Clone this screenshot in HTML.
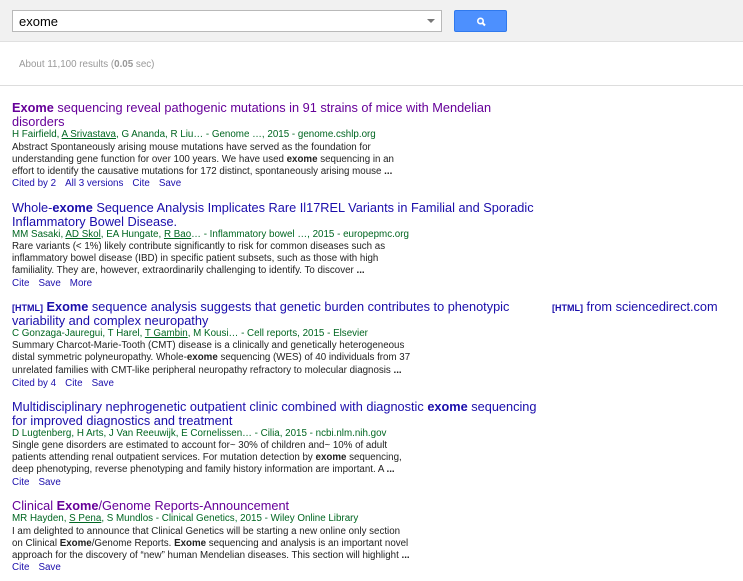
<!DOCTYPE html>
<html><head><meta charset="utf-8"><style>
*{margin:0;padding:0;box-sizing:border-box}
body{width:743px;height:581px;overflow:hidden;background:#fff;font-family:"Liberation Sans",Arial,sans-serif;position:relative}
.hdr{position:absolute;left:0;top:0;width:743px;height:42px;background:#f1f1f1;border-bottom:1px solid #e0e0e0}
.box{position:absolute;left:12px;top:10px;width:430px;height:22px;background:#fff;border:1px solid #b9b9b9;font-size:13px;padding:3px 6px;color:#000}
.arr{position:absolute;left:427px;top:19px;width:0;height:0;border-left:4px solid transparent;border-right:4px solid transparent;border-top:4px solid #777}
.btn{position:absolute;left:454px;top:10px;width:53px;height:22px;background:#4d90fe;border:1px solid #3079ed;border-radius:2px}
.cnt{position:absolute;left:19px;top:59px;font-size:9.8px;color:#999}
.sep{position:absolute;left:0;top:85px;width:743px;height:1px;background:#ddd}
.l{position:absolute;left:12px;white-space:nowrap}
.t{font-size:12.75px;line-height:14px;color:#1a0dab}
.v{color:#660099}
.a{font-size:9.8px;line-height:12px;color:#006621}
.a u{text-decoration:underline}
.s{font-size:9.75px;line-height:12px;color:#222}
.k{font-size:9.8px;line-height:12px;color:#1a0dab}
.k span{margin-right:9px}
.h{font-size:9px;font-weight:bold;color:#1a0dab}
</style></head><body>
<div class="hdr"></div>
<div class="box">exome</div><div class="arr"></div>
<div class="btn"><svg width="53" height="22" viewBox="0 0 53 22"><circle cx="25.5" cy="10" r="2.7" fill="none" stroke="#fff" stroke-width="1.6"/><line x1="27.5" y1="12" x2="30" y2="14.5" stroke="#fff" stroke-width="2"/></svg></div>
<div class="cnt">About 11,100 results (<b>0.05</b> sec)</div>
<div class="sep"></div>

<div class="l t v" style="top:101px"><b>Exome</b> sequencing reveal pathogenic mutations in 91 strains of mice with Mendelian</div>
<div class="l t v" style="top:115px">disorders</div>
<div class="l a" style="top:129px">H Fairfield, <u>A Srivastava</u>, G Ananda, R Liu… - Genome …, 2015 - genome.cshlp.org</div>
<div class="l s" style="top:142px">Abstract Spontaneously arising mouse mutations have served as the foundation for</div>
<div class="l s" style="top:154px">understanding gene function for over 100 years. We have used <b>exome</b> sequencing in an</div>
<div class="l s" style="top:166px">effort to identify the causative mutations for 172 distinct, spontaneously arising mouse <b>...</b></div>
<div class="l k" style="top:178px"><span>Cited by 2</span><span>All 3 versions</span><span>Cite</span><span>Save</span></div>

<div class="l t" style="top:201px">Whole-<b>exome</b> Sequence Analysis Implicates Rare Il17REL Variants in Familial and Sporadic</div>
<div class="l t" style="top:215px">Inflammatory Bowel Disease.</div>
<div class="l a" style="top:229px">MM Sasaki, <u>AD Skol</u>, EA Hungate, <u>R Bao</u>… - Inflammatory bowel …, 2015 - europepmc.org</div>
<div class="l s" style="top:241px">Rare variants (&lt; 1%) likely contribute significantly to risk for common diseases such as</div>
<div class="l s" style="top:253px">inflammatory bowel disease (IBD) in specific patient subsets, such as those with high</div>
<div class="l s" style="top:265px">familiality. They are, however, extraordinarily challenging to identify. To discover <b>...</b></div>
<div class="l k" style="top:278px"><span>Cite</span><span>Save</span><span>More</span></div>

<div class="l t" style="top:300px"><span class="h">[HTML]</span> <b>Exome</b> sequence analysis suggests that genetic burden contributes to phenotypic</div>
<div class="l t" style="top:314px">variability and complex neuropathy</div>
<div class="l t" style="left:552px;top:300px"><span class="h">[HTML]</span> from sciencedirect.com</div>
<div class="l a" style="top:328px">C Gonzaga-Jauregui, T Harel, <u>T Gambin</u>, M Kousi… - Cell reports, 2015 - Elsevier</div>
<div class="l s" style="top:340px">Summary Charcot-Marie-Tooth (CMT) disease is a clinically and genetically heterogeneous</div>
<div class="l s" style="top:352px">distal symmetric polyneuropathy. Whole-<b>exome</b> sequencing (WES) of 40 individuals from 37</div>
<div class="l s" style="top:365px">unrelated families with CMT-like peripheral neuropathy refractory to molecular diagnosis <b>...</b></div>
<div class="l k" style="top:378px"><span>Cited by 4</span><span>Cite</span><span>Save</span></div>

<div class="l t" style="top:400px">Multidisciplinary nephrogenetic outpatient clinic combined with diagnostic <b>exome</b> sequencing</div>
<div class="l t" style="top:414px">for improved diagnostics and treatment</div>
<div class="l a" style="top:428px">D Lugtenberg, H Arts, J Van Reeuwijk, E Cornelissen… - Cilia, 2015 - ncbi.nlm.nih.gov</div>
<div class="l s" style="top:440px">Single gene disorders are estimated to account for~ 30% of children and~ 10% of adult</div>
<div class="l s" style="top:452px">patients attending renal outpatient services. For mutation detection by <b>exome</b> sequencing,</div>
<div class="l s" style="top:464px">deep phenotyping, reverse phenotyping and family history information are important. A <b>...</b></div>
<div class="l k" style="top:477px"><span>Cite</span><span>Save</span></div>

<div class="l t v" style="top:499px">Clinical <b>Exome</b>/Genome Reports-Announcement</div>
<div class="l a" style="top:513px">MR Hayden, <u>S Pena</u>, S Mundlos - Clinical Genetics, 2015 - Wiley Online Library</div>
<div class="l s" style="top:526px">I am delighted to announce that Clinical Genetics will be starting a new online only section</div>
<div class="l s" style="top:538px">on Clinical <b>Exome</b>/Genome Reports. <b>Exome</b> sequencing and analysis is an important novel</div>
<div class="l s" style="top:550px">approach for the discovery of “new” human Mendelian diseases. This section will highlight <b>...</b></div>
<div class="l k" style="top:562px"><span>Cite</span><span>Save</span></div>
</body></html>
